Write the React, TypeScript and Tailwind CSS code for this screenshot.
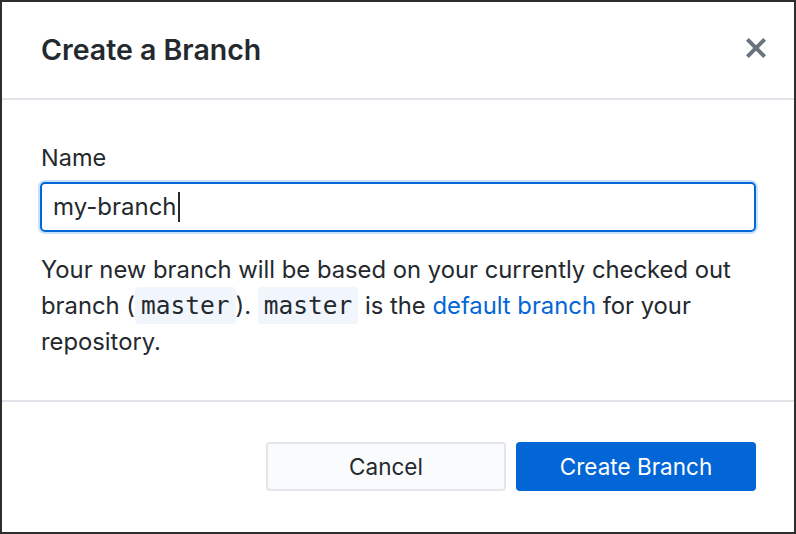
export default function App() {
  return (
    <div className="flex h-[534px] w-[796px] flex-col border-2 border-[#2e2e2e] bg-white font-['Inter',sans-serif] text-[#24292e]">
      <div className="flex h-[98px] shrink-0 items-center justify-between border-b-2 border-[#e1e4e8] pl-[39px] pr-[28px]">
        <h1 className="text-[28.5px] font-semibold leading-none">Create a Branch</h1>
        <svg
          width="20"
          height="20"
          viewBox="0.77 2.77 10.46 10.46"
          className="mb-[4px] fill-[#6a737d]"
        >
          <path d="M7.48 8l3.75 3.75-1.48 1.48L6 9.48l-3.75 3.75-1.48-1.48L4.52 8 .77 4.25l1.48-1.48L6 6.52l3.75-3.75 1.48 1.48L7.48 8z" />
        </svg>
      </div>

      <div className="px-[38px] pt-[43px] pb-[40px]">
        <label className="block pl-[1px] text-[23.5px] leading-[30px]">Name</label>
        <div className="mt-[9px] flex h-[50px] items-center rounded-[5px] border-2 border-[#0366d6] pl-[11px] text-[24px] shadow-[0_0_0_2px_#c8e1ff]">
          <span>my-branch</span>
          <span className="ml-[1px] h-[30px] w-[2px] bg-[#24292e]" />
        </div>
        <p className="mt-[20px] pl-[1px] text-[23.8px] leading-[36px]">
          Your new branch will be based on your currently checked out branch (
          <code className="rounded-[4px] bg-[#f1f6fd] px-[6px] py-[4px] font-['DejaVu_Sans_Mono',monospace] text-[24.5px]">
            master
          </code>
          ).{' '}
          <code className="rounded-[4px] bg-[#f1f6fd] px-[6px] py-[4px] font-['DejaVu_Sans_Mono',monospace] text-[24.5px]">
            master
          </code>{' '}
          is the <span className="text-[#0366d6]">default branch</span> for your repository.
        </p>
      </div>

      <div className="flex flex-1 items-start justify-end gap-[10px] border-t-2 border-[#e1e4e8] pl-[39px] pr-[38px] pt-[40px]">
        <button className="h-[49px] w-[240px] rounded-[4px] border-2 border-[#e3e6ea] bg-[#fafbfc] text-[22.5px]">
          Cancel
        </button>
        <button className="h-[49px] w-[240px] rounded-[4px] bg-[#0366d6] text-[22.5px] text-white">
          Create Branch
        </button>
      </div>
    </div>
  )
}
